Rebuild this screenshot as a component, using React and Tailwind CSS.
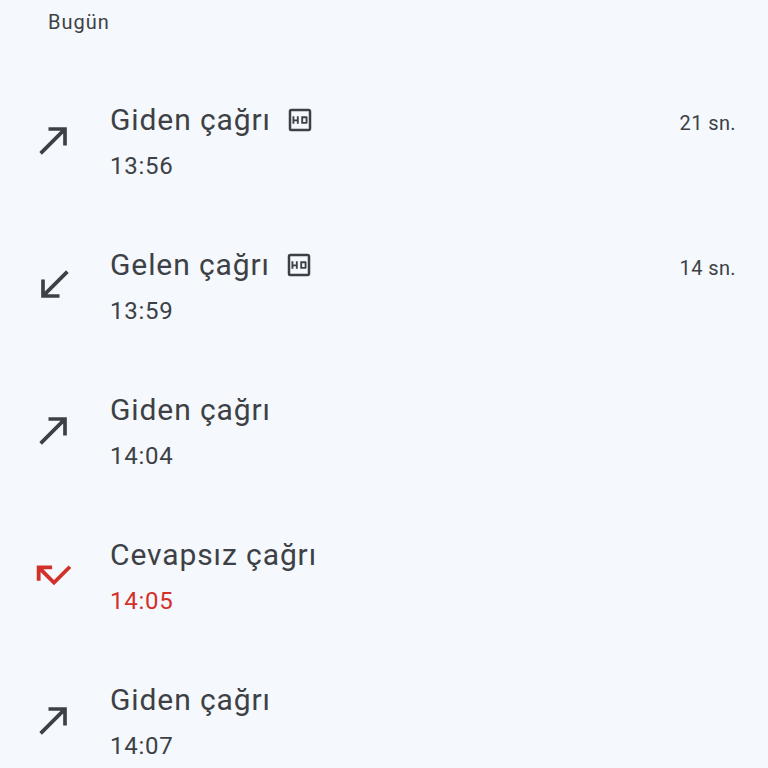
import { MdOutlineHd } from 'react-icons/md';

const calls = [
    { type: 'out', label: 'Giden çağrı', time: '13:56', hd: true, duration: '21 sn.' },
    { type: 'in', label: 'Gelen çağrı', time: '13:59', hd: true, duration: '14 sn.' },
    { type: 'out', label: 'Giden çağrı', time: '14:04' },
    { type: 'missed', label: 'Cevapsız çağrı', time: '14:05' },
    { type: 'out', label: 'Giden çağrı', time: '14:07' },
];

function CallIcon({ type }) {
    if (type === 'missed') {
        return (
            <svg viewBox="0 0 24 24" className="w-[46px] h-[46px] fill-[#d3302a]">
                <path d="M19.59 7L12 14.59 6.41 9H11V7H3v8h2v-4.59l7 7 9-9z" />
            </svg>
        );
    }
    if (type === 'in') {
        return (
            <svg viewBox="0 0 24 24" className="w-[44px] h-[44px] fill-[#3d4145]">
                <path d="M20 5.41L18.59 4 7 15.59V9H5v10h10v-2H8.41z" />
            </svg>
        );
    }
    return (
        <svg viewBox="0 0 24 24" className="w-[44px] h-[44px] fill-[#3d4145]">
            <path d="M9 5v2h6.59L4 18.59 5.41 20 17 8.41V15h2V5z" />
        </svg>
    );
}

export default function App() {
    return (
        <main className="w-[768px] h-[768px] overflow-hidden bg-[#f5f8fd] text-[#3d4145] font-['Roboto',sans-serif]">
            <div className="h-[72px] pl-[48px] pt-[9px]">
                <p className="text-[20px] leading-[26px] tracking-[0.05em] text-[#3d4145]">Bugün</p>
            </div>

            {calls.map((c, i) => (
                <div key={i} className="h-[145px] flex items-center pr-[32px]">
                    <div className="w-[46px] ml-[31px] mb-[10px] flex items-center justify-center">
                        <CallIcon type={c.type} />
                    </div>
                    <div className="ml-[33px] flex-1 flex flex-col">
                        <div className="flex items-center h-[40px] mt-[-4px]">
                            <span className="text-[30px] leading-[40px] tracking-[0.03em]">{c.label}</span>
                            <span className="ml-[14px]">
                                {c.hd && <MdOutlineHd size={30} className="text-[#3d4145]" />}
                            </span>
                            {c.duration && (
                                <span className="ml-auto text-[20px] leading-[40px] mt-[6px] tracking-[0.02em]">{c.duration}</span>
                            )}
                        </div>
                        <span className={`mt-[6px] text-[24px] leading-[40px] tracking-[0.03em] ${c.type === 'missed' ? 'text-[#d3302a]' : 'text-[#3d4145]'}`}>
                            {c.time}
                        </span>
                    </div>
                </div>
            ))}
        </main>
    );
}
